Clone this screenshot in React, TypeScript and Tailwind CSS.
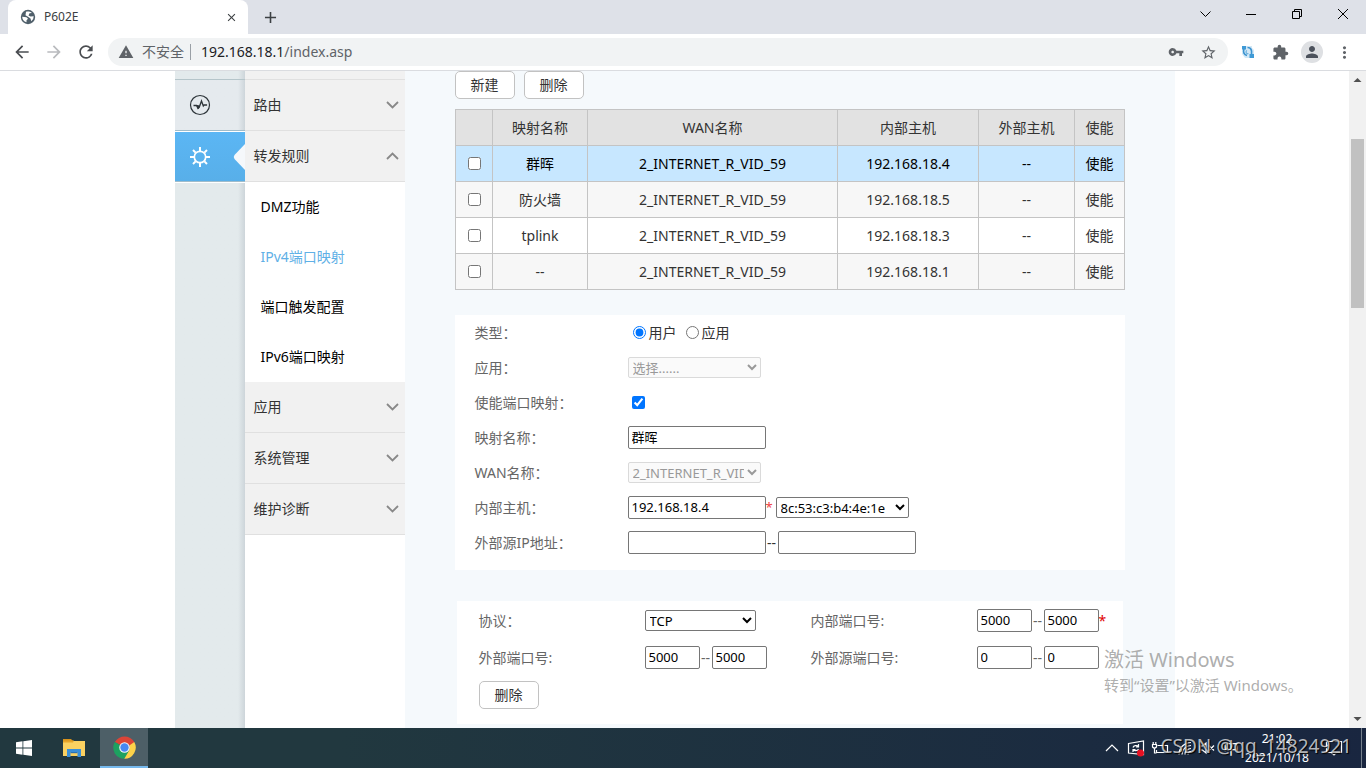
import React from "react";
import {
  MdArrowBack,
  MdArrowForward,
  MdRefresh,
  MdWarning,
  MdVpnKey,
  MdStarBorder,
  MdExtension,
  MdPerson,
  MdMoreVert,
  MdAdd,
  MdClose,
} from "react-icons/md";

const FONT = "font-['Noto_Sans','Noto_Sans_CJK_SC',sans-serif]";

function WindowControls() {
  const btn = "flex h-7 w-[46px] items-center justify-center";
  const line = { fill: "none", stroke: "#000", strokeWidth: 1 } as const;
  return (
    <div className="ml-auto flex">
      <button className={btn} aria-label="搜索标签页">
        <svg width="11" height="7" viewBox="0 0 11 7" {...line}>
          <path d="M.5.5l5 5 5-5" />
        </svg>
      </button>
      <button className={btn} aria-label="最小化">
        <svg width="10" height="10" viewBox="0 0 10 10" {...line}>
          <path d="M0 5.5h10" />
        </svg>
      </button>
      <button className={btn} aria-label="还原">
        <svg width="10" height="10" viewBox="0 0 10 10" {...line}>
          <path d="M.5 2.5h7v7h-7zM2.5 2.500V.5h7v7h-2" />
        </svg>
      </button>
      <button className={btn} aria-label="关闭">
        <svg width="10" height="10" viewBox="0 0 10 10" {...line}>
          <path d="M0 0l10 10M10 0L0 10" />
        </svg>
      </button>
    </div>
  );
}

function TabStrip() {
  return (
    <div className="flex h-[34px] shrink-0 bg-[#dee1e8] pl-2">
      <div className="flex w-60 items-center rounded-t-lg bg-white pr-2.5 pl-3">
        <svg width="16" height="16" viewBox="0 0 16 16">
          <circle cx="8" cy="8" r="7.200" fill="#50606b" />
          <path d="M2.200 7.800L6.500 8.200 8 9.800 6.500 11.200V13.300A6 6 0 0 1 2.200 7.800z" fill="#fff" />
          <path d="M6 2.800C8 2 10.500 2.500 11.800 3.900L9.500 4.300 8.500 6.500l2 .9L13.700 7.200A6 6 0 0 1 11.300 12.200L10.500 9.500 8 7.800 5.500 6.300z" fill="#fff" />
        </svg>
        <span className="ml-2 text-xs text-[#3c4043]">P602E</span>
        <button className="ml-auto" aria-label="关闭标签页">
          <MdClose size={13} color="#3c4043" />
        </button>
      </div>
      <button className="ml-3 flex w-5 items-center justify-center" aria-label="新标签页">
        <MdAdd size={19} color="#3c4043" />
      </button>
      <WindowControls />
    </div>
  );
}

function Toolbar() {
  const btn = "flex size-8 shrink-0 items-center justify-center";
  return (
    <div className="flex h-[37px] shrink-0 items-center border-b border-[#dadce0] bg-white px-1.5">
      <button className={btn} aria-label="后退"><MdArrowBack size={20} color="#4a4d51" /></button>
      <button className={btn} aria-label="前进"><MdArrowForward size={20} color="#b9bbbe" /></button>
      <button className={btn} aria-label="重新加载"><MdRefresh size={20} color="#4a4d51" /></button>
      <div className="mr-1 ml-1.5 flex h-7 flex-1 items-center rounded-full bg-[#f1f3f4] pr-1 pl-2.5">
        <MdWarning size={16} color="#5f6368" />
        <span className="ml-2 text-sm text-[#5f6368]">不安全</span>
        <span className="ml-1.5 h-4 w-px bg-[#9aa0a6]" />
        <div className="ml-2.5 flex-1 text-sm text-[#202124]">
          192.168.18.1<span className="text-[#5f6368]">/index.asp</span>
        </div>
        <button className={btn} aria-label="密码"><MdVpnKey size={16} color="#5f6368" /></button>
        <button className={btn} aria-label="收藏"><MdStarBorder size={17} color="#5f6368" /></button>
      </div>
      <button className={btn} aria-label="扩展">
        <svg width="14" height="14" viewBox="0 0 14 14">
          <path d="M1 1h10v2l2 2v8H4l-3-4z" fill="#d3e8f6" />
          <path d="M1 1h4v3.500H1zM8.500 9H13v4H8.500z" fill="#3f9ad6" />
          <path d="M3 4C1.800 7 3 10 6 10.500M6.500 2.500C10 2.500 11 5 10.500 9" fill="none" stroke="#3a92cf" strokeWidth="1.600" />
          <path d="M6 5.500a1.600 1.600 0 1 0 1.500 3" fill="none" stroke="#6fb4e0" strokeWidth="1.300" />
        </svg>
      </button>
      <button className={btn} aria-label="扩展程序"><MdExtension size={17} color="#5f6368" /></button>
      <button className={btn} aria-label="个人资料">
        <span className="flex size-[22px] items-center justify-center rounded-full bg-[#dee0e3]">
          <MdPerson size={18} color="#4c525c" />
        </span>
      </button>
      <button className={btn} aria-label="菜单"><MdMoreVert size={19} color="#5f6368" /></button>
    </div>
  );
}

function IconRail() {
  return (
    <div className="flex w-[70px] shrink-0 flex-col bg-[#e3eaec]">
      <div className="h-2 shrink-0 bg-linear-to-r from-[#e3eaec] from-90% to-[#cdd5da]" />
      <a href="#status" aria-label="状态" className="flex h-[52px] shrink-0 items-center border-t border-b border-t-[#b5c5ca] border-b-[#9fbccb] bg-linear-to-r from-[#e5eaee] from-90% to-[#cdd5da] pl-3.5">
        <svg width="22" height="22" viewBox="0 0 22 22" fill="none" stroke="#2d3439">
          <circle cx="11" cy="11" r="9.500" strokeWidth="1.200" />
          <path d="M4.500 11.500h3l1.500 3 1.200-1.200L12.500 7l1.800 5 .8-1h3" strokeWidth="1.300" />
          <path d="M8 11.500l1.200 3 1.300-2.500z" fill="#2d3439" />
        </svg>
      </a>
      <a href="#advanced" aria-label="高级配置" className="flex h-[51px] shrink-0 items-center border-t border-b border-t-white border-b-[#9fbccb] bg-linear-to-b from-[#5bb6f4] to-[#58afe9] pl-3.5">
        <svg width="22" height="22" viewBox="0 0 22 22" fill="none" stroke="#fff">
          <circle cx="11" cy="11" r="5.700" strokeWidth="1.700" />
          <path d="M11 1v4M11 17v4M1 11h4M17 11h4M4 4l2.600 2.600M15.400 15.400L18 18M18 4l-2.600 2.600M6.600 15.400L4 18" strokeWidth="2" />
        </svg>
        <svg className="ml-auto" width="12" height="26" viewBox="0 0 12 26">
          <path d="M12 0L1.500 11Q0 13 1.500 15L12 26z" fill="#f5f8fb" />
        </svg>
      </a>
      <div className="flex-1 border-t border-white bg-linear-to-r from-[#e3eaec] from-90% to-[#cdd5da]" />
    </div>
  );
}

function MenuItem({ label, open }: { label: string; open?: boolean }) {
  return (
    <button className="flex h-[51px] w-full shrink-0 items-center justify-between border-b border-[#e0e0e0] bg-[#f1f1f1] pr-1.5 pl-[9px] text-sm text-[#333]" aria-expanded={!!open}>
      {label}
      <svg width="13" height="8" viewBox="0 0 13 8" fill="none" stroke="#888" strokeWidth="1.800">
        <path d={open ? "M1 7l5.500-5.500L12 7" : "M1 1l5.500 5.500L12 1"} />
      </svg>
    </button>
  );
}

const SUBMENU = ["DMZ功能", "IPv4端口映射", "端口触发配置", "IPv6端口映射"];

function SideMenu() {
  return (
    <nav className="flex w-40 shrink-0 flex-col bg-white">
      <div className="h-[9px] shrink-0 border-b border-[#e0e0e0] bg-[#f1f1f1]" />
      <MenuItem label="路由" />
      <MenuItem label="转发规则" open />
      {SUBMENU.map((s, i) => (
        <a key={s} href="#sub" className={"flex h-[50px] shrink-0 items-center pl-4 text-sm " + (i === 1 ? "text-[#5fb0e6]" : "text-black")}>
          {s}
        </a>
      ))}
      <MenuItem label="应用" />
      <MenuItem label="系统管理" />
      <MenuItem label="维护诊断" />
    </nav>
  );
}

function Button({ children }: { children: React.ReactNode }) {
  return (
    <button className="h-7 w-[60px] rounded-[5px] border border-[#c2c2c2] bg-white text-sm text-[#333]">{children}</button>
  );
}

const HEAD = ["映射名称", "WAN名称", "内部主机", "外部主机", "使能"];
const ROWS = [
  ["群晖", "192.168.18.4"],
  ["防火墙", "192.168.18.5"],
  ["tplink", "192.168.18.3"],
  ["--", "192.168.18.1"],
];
const ROW_STYLE = ["bg-[#c7e7ff] text-black", "bg-[#f7f7f7] text-[#333]", "bg-white text-[#333]", "bg-[#f7f7f7] text-[#333]"];

function MappingTable() {
  const cell = "border border-[#c4c4c4] p-0 pl-px font-normal";
  return (
    <table className="mt-2.5 w-full table-fixed border-collapse text-center text-sm">
      <colgroup>
        <col className="w-[37px]" />
        <col className="w-[95px]" />
        <col />
        <col className="w-[141px]" />
        <col className="w-24" />
        <col className="w-[50px]" />
      </colgroup>
      <thead>
        <tr className="h-9 bg-[#e2e2e2] text-[#333]">
          <th className={cell} />
          {HEAD.map((h) => <th key={h} className={cell}>{h}</th>)}
        </tr>
      </thead>
      <tbody>
        {ROWS.map(([name, host], i) => (
          <tr key={name} className={"h-9 " + ROW_STYLE[i]}>
            <td className={cell}><input type="checkbox" aria-label={name} className="mx-auto block size-[13px]" /></td>
            <td className={cell}>{name}</td>
            <td className={cell}>2_INTERNET_R_VID_59</td>
            <td className={cell}>{host}</td>
            <td className={cell}>--</td>
            <td className={cell}>使能</td>
          </tr>
        ))}
      </tbody>
    </table>
  );
}

const INPUT = "h-[23px] rounded-[2px] border border-[#767676] bg-white px-[3px] pb-0.5 text-[13px] text-black";
const SELECT = "h-[21px] rounded-[2px] border text-[13px]";
const ENABLED = " border-[#767676] bg-white text-black";
const DISABLED = " border-[#dadada] bg-[#fafafa] text-[#999]";

function Row({ label, id, children }: { label: string; id?: string; children: React.ReactNode }) {
  return (
    <div className="flex h-[35px] items-center text-sm">
      <label htmlFor={id} className="w-[153px] shrink-0 text-[#666]">{label}</label>
      {children}
    </div>
  );
}

function MappingForm() {
  return (
    <form className="mt-[25px] bg-white pb-2.5 pl-5">
      <Row label="类型：">
        <label className="ml-[5px] flex items-center gap-[3px] text-[#333]">
          <input type="radio" name="kind" defaultChecked className="size-[13px] accent-[#0075ff]" />用户
        </label>
        <label className="ml-[9px] flex items-center gap-[3px] text-[#333]">
          <input type="radio" name="kind" className="size-[13px]" />应用
        </label>
      </Row>
      <Row label="应用：" id="app">
        <select id="app" disabled className={SELECT + " w-[133px]" + DISABLED}><option>选择......</option></select>
      </Row>
      <Row label="使能端口映射：" id="enable">
        <input id="enable" type="checkbox" defaultChecked className="ml-1 size-[13px] accent-[#0075ff]" />
      </Row>
      <Row label="映射名称：" id="name">
        <input id="name" defaultValue="群晖" className={INPUT + " w-[138px]"} />
      </Row>
      <Row label="WAN名称：" id="wan">
        <select id="wan" disabled className={SELECT + " w-[133px]" + DISABLED}><option>2_INTERNET_R_VID_59</option></select>
      </Row>
      <Row label="内部主机：" id="host">
        <input id="host" defaultValue="192.168.18.4" className={INPUT + " w-[138px]"} />
        <span className="w-2.5 text-[13px] text-[#f04040]">*</span>
        <select aria-label="MAC" className={SELECT + " w-[133px]" + ENABLED}><option>8c:53:c3:b4:4e:1e</option></select>
      </Row>
      <Row label="外部源IP地址：" id="src">
        <input id="src" className={INPUT + " w-[138px]"} />
        <span className="w-3 text-center text-[#333]">--</span>
        <input aria-label="结束地址" className={INPUT + " w-[138px]"} />
      </Row>
    </form>
  );
}

function PortRange({ id, value, required }: { id: string; value: string; required?: boolean }) {
  return (
    <div className="flex items-center">
      <input id={id} defaultValue={value} className={INPUT + " w-[55px]"} />
      <span className="w-3 text-center text-[#666]">--</span>
      <input aria-label={id} defaultValue={value} className={INPUT + " w-[55px]"} />
      {required && <span className="text-[#e00000]">*</span>}
    </div>
  );
}

function PortForm() {
  const cell = "flex h-[37px] items-center pl-[21px]";
  return (
    <form className="mx-0.5 mt-[31px] bg-white px-px pt-px pb-[15px] text-sm text-[#666]">
      <div className="grid grid-cols-4">
        <label className={cell} htmlFor="proto">协议：</label>
        <div className={cell}>
          <select id="proto" className={SELECT + " w-[111px]" + ENABLED}><option>TCP</option></select>
        </div>
        <label className={cell} htmlFor="inner">内部端口号:</label>
        <div className={cell}><PortRange id="inner" value="5000" required /></div>
        <label className={cell} htmlFor="outer">外部端口号:</label>
        <div className={cell}><PortRange id="outer" value="5000" /></div>
        <label className={cell} htmlFor="outersrc">外部源端口号:</label>
        <div className={cell}><PortRange id="outersrc" value="0" /></div>
      </div>
      <div className="mt-[5px] pl-[21px]"><Button>删除</Button></div>
    </form>
  );
}

function ScrollBar() {
  return (
    <div className="flex w-[17px] shrink-0 flex-col items-center bg-[#f1f1f1]">
      <svg width="17" height="17" viewBox="0 0 17 17"><path d="M4.500 11L8.500 7l4 4z" fill="#505050" /></svg>
      <div className="mt-[51px] h-[169px] w-[13px] bg-[#c1c1c1]" />
      <svg className="mt-auto" width="17" height="17" viewBox="0 0 17 17"><path d="M4.500 6l4 4 4-4z" fill="#505050" /></svg>
    </div>
  );
}

function ChromeLogo() {
  return (
    <svg width="23" height="23" viewBox="0 0 48 48">
      <path d="M24 24L4 12.500A23.500 23.500 0 0 1 44.400 12.500z" fill="#dc4437" />
      <path d="M3.600 12.300A23.500 23.500 0 0 0 24 47.500L34 30 24 24z" fill="#1da160" />
      <path d="M44.400 12.500A23.500 23.500 0 0 1 23.600 47.500L34 29.500 34.300 18 24 12.500z" fill="#fdd249" />
      <path d="M24 12.500h20.400L34 20z" fill="#dc4437" />
      <circle cx="24" cy="24" r="11" fill="#f1f3f5" />
      <circle cx="24" cy="24" r="8.700" fill="#4587f4" />
    </svg>
  );
}

function Tray() {
  const s = { fill: "none", stroke: "#fff", strokeWidth: 1.2 } as const;
  return (
    <div className="ml-auto flex items-center text-white">
      <svg width="14" height="8" viewBox="0 0 14 8" {...s}><path d="M1 7l6-6 6 6" /></svg>
      <svg className="ml-2" width="18" height="18" viewBox="0 0 18 18" {...s}>
        <path d="M1.500 4.500l15-2.500v13.500l-15-1.500z" />
        <path d="M6 8.500c.5-2 4-2.500 5.500-.8M11.500 5v3H9M11.500 10c-1 2-4 2.200-5.500.5M6 13v-2.500h2.500" />
        <circle cx="13.500" cy="14" r="3.500" fill="#e81123" stroke="none" />
      </svg>
      <svg className="ml-1.5" width="18" height="14" viewBox="0 0 18 14" {...s}>
        <path d="M6.500 4.500h10v7H5.500V9M3.500 7v5h2M1.500 3.500h4V6q-2 2-4 0zM2.200 1v2.500M4.800 1v2.500" />
      </svg>
      <svg className="ml-2" width="16" height="16" viewBox="0 0 16 16" {...s}>
        <path d="M2 14.500a12 12 0 0 1 12-12M5 14.500a9 9 0 0 1 9-9M8 14.500a6 6 0 0 1 6-6M11 14.500a3 3 0 0 1 3-3" />
      </svg>
      <svg className="ml-1.5" width="16" height="14" viewBox="0 0 16 14" {...s}>
        <path d="M1 5v4h2.500L7 12V2L3.500 5zM10 4.500l5 5M15 4.500l-5 5" />
      </svg>
      <span className="ml-2 w-4 text-base leading-5">中</span>
      <div className="ml-1 w-[68px] text-center text-xs leading-[19px]">
        <div>21:02</div>
        <div>2021/10/18</div>
      </div>
      <svg className="ml-3.5" width="18" height="18" viewBox="0 0 18 18" {...s}>
        <path d="M1.500 2.500h15v11h-5L9 16l-2.500-2.500h-5z" />
      </svg>
      <span className="ml-[18px] h-10 w-px bg-[#75808c]" />
      <span className="w-1" />
    </div>
  );
}

function Taskbar() {
  return (
    <footer className="relative flex h-10 shrink-0 bg-linear-to-r from-[#21383f] from-25% to-[#192640]">
      <button className="flex w-12 items-center justify-center" aria-label="开始">
        <svg width="16" height="16" viewBox="0 0 16 16" fill="#fff">
          <path d="M0 2.200L6.500 1.300v6.200H0zM7.300 1.200L16 0v7.500H7.300zM0 8.400h6.500v6.300L0 13.800zM7.300 8.400H16V16l-8.700-1.200z" />
        </svg>
      </button>
      <button className="flex w-[52px] items-center justify-center" aria-label="文件资源管理器">
        <svg width="22" height="20" viewBox="0 0 22 20">
          <path d="M0 1h8l2 2H0z" fill="#d8921c" />
          <path d="M0 3h22v15H0z" fill="#fad161" />
          <path d="M0 2.500h11l-1 2H0z" fill="#e6a52a" />
          <path d="M4 19v-8h14v8h-3.500v-5h-7v5z" fill="#3a8fd8" />
          <path d="M7.500 14h7v1.200h-7z" fill="#2a72b5" />
        </svg>
      </button>
      <button className="flex w-12 items-center justify-center border-b-2 border-[#76b9ed] bg-[#4d5f67]" aria-label="Chrome">
        <ChromeLogo />
      </button>
      <Tray />
      <div className="pointer-events-none absolute right-3.5 bottom-2 text-[19px] leading-7 text-white/70 [text-shadow:1px_1px_1px_#000]">
        CSDN @qq_14824921
      </div>
    </footer>
  );
}

export default function App() {
  return (
    <div className={"flex h-screen flex-col overflow-hidden bg-white " + FONT}>
      <TabStrip />
      <Toolbar />
      <div className="relative flex min-h-0 flex-1">
        <div className="flex min-w-0 flex-1 justify-center overflow-hidden">
          <div className="flex w-full max-w-[1000px]">
            <IconRail />
            <SideMenu />
            <main className="min-w-0 flex-1 bg-[#f5f9fc] px-[50px]">
              <div className="flex gap-[9px]">
                <Button>新建</Button>
                <Button>删除</Button>
              </div>
              <MappingTable />
              <MappingForm />
              <PortForm />
            </main>
          </div>
        </div>
        <ScrollBar />
        <div className="pointer-events-none absolute right-[60px] bottom-8 w-[202px] whitespace-nowrap text-[#999]/80">
          <div className="text-xl leading-7">激活 Windows</div>
          <div className="text-[15px] leading-[22px]">转到“设置”以激活 Windows。</div>
        </div>
      </div>
      <Taskbar />
    </div>
  );
}
